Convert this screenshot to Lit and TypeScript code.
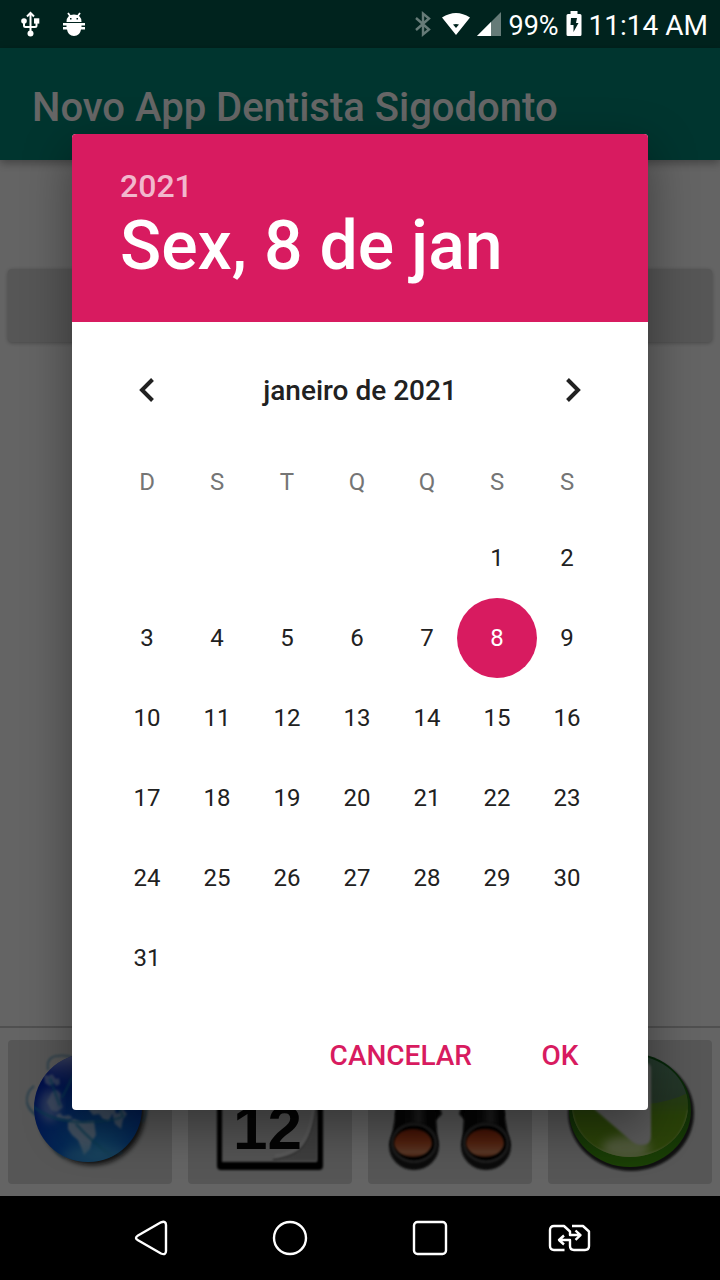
import { LitElement, html, css, svg, nothing } from "lit";
import { customElement, state } from "lit/decorators.js";
import { classMap } from "lit/directives/class-map.js";

const WEEKDAYS = [
  ["D", "domingo"],
  ["S", "segunda-feira"],
  ["T", "terça-feira"],
  ["Q", "quarta-feira"],
  ["Q", "quinta-feira"],
  ["S", "sexta-feira"],
  ["S", "sábado"],
];
const SHORT_DAYS = ["Dom", "Seg", "Ter", "Qua", "Qui", "Sex", "Sáb"];
const FIRST_WEEKDAY = 5;
const DAYS_IN_MONTH = 31;

const usbIcon = html`<svg width="24" height="28" viewBox="0 0 24 28" aria-hidden="true">
  <g fill="none" stroke="#fff" stroke-width="2">
    <path d="M12.5 4v20M6 11v4.500q0 1.500 1.500 1.500h9.500q1.500 0 1.500-1.500V11" />
    <path d="M9 6.500l3.500-3.500 3.500 3.500" />
  </g>
  <circle cx="6" cy="11" r="2.800" fill="#fff" />
  <rect x="16" y="8.300" width="5.300" height="5.300" fill="#fff" />
  <circle cx="12.500" cy="23.500" r="3" fill="#fff" />
</svg>`;

const bugIcon = html`<svg width="24" height="28" viewBox="0 0 24 28" aria-hidden="true">
  <path d="M6 3l2.500 3.500M18 3l-2.500 3.500" stroke="#fff" stroke-width="1.800" />
  <path fill="#fff" fill-rule="evenodd" d="M4.500 12q0-7.500 7.500-7.500t7.500 7.500zM8 8v1.500h1.500V8zM14.500 8v1.500H16V8z" />
  <path fill="#fff" d="M1 13h22v2.500h-3.500V17H23v2.500h-4q-1 6.500-7 6.500t-7-6.500H1V17h3.500v-1.500H1z" />
</svg>`;

const bluetoothIcon = html`<svg width="16" height="28" viewBox="0 0 16 28" aria-hidden="true">
  <path d="M1 8l13 11.500-6 5V3.500l6 5L1 20" fill="none" stroke="#667b78" stroke-width="2.400" />
</svg>`;

const wifiIcon = html`<svg width="28" height="28" viewBox="0 0 28 28" aria-hidden="true">
  <path fill="#fff" fill-rule="evenodd" d="M0 7.500Q14-1.500 28 7.500L14 25zM11 14.500l3 3.500 3-3.500q-3-1-6 0z" />
</svg>`;

const signalIcon = html`<svg width="24" height="28" viewBox="0 0 24 28" aria-hidden="true">
  <path d="M24 2v24H0z" fill="#667b78" />
  <path d="M14 12v14H0z" fill="#fff" />
</svg>`;

const batteryIcon = html`<svg width="16" height="28" viewBox="0 0 16 28" aria-hidden="true">
  <path fill="#fff" d="M4.500 1h7v3H14q1.500 0 1.500 1.500v19Q15.500 26 14 26H2Q.5 26 .5 24.500v-19Q.5 4 2 4h2.500z" />
  <path fill="#00231e" d="M5 8h6l-1 5h2.500L7.500 22v-7H4.500z" />
</svg>`;

const globeArt = html`<svg class="art" viewBox="0 0 164 144" aria-hidden="true">
  <defs>
    <radialGradient id="sea" cx=".6" cy=".9" r=".85">
      <stop offset="0" stop-color="#2a9be6" />
      <stop offset=".4" stop-color="#0a62d0" />
      <stop offset=".75" stop-color="#053cc4" />
      <stop offset="1" stop-color="#0424b8" />
    </radialGradient>
    <linearGradient id="gloss" x1="0" y1="0" x2="0" y2="1">
      <stop offset="0" stop-color="#dfe6ff" stop-opacity=".85" />
      <stop offset="1" stop-color="#5a7fe0" stop-opacity=".1" />
    </linearGradient>
    <filter id="soft1"><feGaussianBlur stdDeviation="1" /></filter>
    <filter id="soft2" x="-20%" y="-20%" width="140%" height="140%"><feGaussianBlur stdDeviation="2.500" /></filter>
    <filter id="soft4" x="-30%" y="-30%" width="160%" height="160%"><feGaussianBlur stdDeviation="4" /></filter>
    <clipPath id="ball"><circle cx="80" cy="68" r="54" /></clipPath>
  </defs>
  <circle cx="84" cy="72" r="53" fill="#111" opacity=".85" filter="url(#soft2)" />
  <g fill="none" stroke="#1671a8" stroke-width="1.600" opacity=".6" filter="url(#soft1)">
    <path d="M26 46q-8 6-7 16 0 8 12 16" />
    <path d="M19 62q2 10 14 15" />
    <path d="M40 30q-2-12 8-14 10-2 22 3" />
    <path d="M45 104q1 10 12 14M100 112q10 3 14 0" />
    <path d="M134 82q5-6 5-18" />
  </g>
  <circle cx="80" cy="68" r="54" fill="url(#sea)" />
  <g clip-path="url(#ball)">
    <ellipse cx="62" cy="26" rx="26" ry="16" fill="url(#gloss)" filter="url(#soft4)" />
    <ellipse cx="42" cy="66" rx="10" ry="16" fill="#a5bcf0" opacity=".6" filter="url(#soft4)" />
    <g fill="#b9d2ee" filter="url(#soft1)">
      <path d="M36 34l4 2 4-2 4 5 3-1 1 6-4 2-2-3-4 3-5-3z" opacity=".6" />
      <path d="M44 52l5-2 4 4-1 7 3 6-6 5-6-2-4-8z" opacity=".55" />
      <path d="M60 82l6-3 8 3 12-1 2 14-4 6-2 8-6 6-3-8-3-7-6-5-4-6z" opacity=".85" />
      <path d="M81 62l24-4 3 12-4 4-3 7-6-2-4-5-6 1-4-5z" opacity=".8" />
      <path d="M104 70l6 4 4-6 5 6-4 5-2 10-6-5-2-7z" opacity=".75" />
      <path d="M48 75l4-2 3 3 6-1 4 3-5 2-6-1-5-1z" opacity=".7" />
    </g>
    <g fill="none" stroke="#1288bd" stroke-width="2" opacity=".8" filter="url(#soft1)">
      <path d="M22 64q20 18 52 18t42-6M68 84q16 18 38 34M42 38q4 12 10 28M66 34L54 58M106 58l9 18" />
    </g>
    <ellipse cx="88" cy="116" rx="34" ry="10" fill="#4fb0e6" opacity=".5" filter="url(#soft4)" />
  </g>
</svg>`;

const calendarArt = html`<svg class="art" viewBox="0 0 164 144" aria-hidden="true">
  <defs>
    <filter id="blurc"><feGaussianBlur stdDeviation="1.200" /></filter>
  </defs>
  <rect x="29" y="12" width="106" height="118" rx="4" fill="#050505" filter="url(#blurc)" />
  <rect x="34" y="30" width="95" height="92" fill="#cfcfcf" filter="url(#blurc)" />
  <path d="M35 121h94" stroke="#888" stroke-width="1.500" filter="url(#blurc)" />
  <path d="M129 66v55H84q22-2 32-14 11-14 13-41z" fill="#9c9c9c" filter="url(#blurc)" />
  <path d="M128 64q-2 30-13 43-8 10-30 13" fill="none" stroke="#666" stroke-width="1.500" filter="url(#blurc)" />
  <path d="M126 62q-2 28-13 42-7 9-26 12" fill="none" stroke="#e8e8e8" stroke-width="2" filter="url(#blurc)" />
  <text class="art-number" x="45" y="109">12</text>
</svg>`;

const lens = (x: number) => svg`
  <ellipse cx=${x} cy="106" rx="25" ry="24" fill="#1c1c1c" filter="url(#blurb)" />
  <ellipse cx=${x} cy="103" rx="22" ry="19" fill="#050505" stroke="#606060" stroke-width="1.500" filter="url(#blurb)" />
  <ellipse cx=${x - 1} cy="103" rx="19" ry="14" fill="url(#lens)" filter="url(#blurb)" />`;

const binocularsArt = html`<svg class="art" viewBox="0 0 164 144" aria-hidden="true">
  <defs>
    <filter id="blurb"><feGaussianBlur stdDeviation="1" /></filter>
    <linearGradient id="lens" x1="0" y1="0" x2="0" y2="1">
      <stop offset="0" stop-color="#a02c0c" />
      <stop offset=".5" stop-color="#cc5628" />
      <stop offset=".85" stop-color="#dc8a60" />
      <stop offset="1" stop-color="#b04a20" />
    </linearGradient>
    <linearGradient id="tube">
      <stop offset="0" stop-color="#050505" />
      <stop offset=".4" stop-color="#151515" />
      <stop offset=".6" stop-color="#484848" />
      <stop offset=".8" stop-color="#080808" />
    </linearGradient>
  </defs>
  <path d="M27 74l9-54h26l10 20h20l10-20h26l9 54-2 6H97l-6-6 2-6H72l2 6-6 6H28z" fill="#0c0c0c" filter="url(#blurb)" />
  <path d="M30 60h37l3 46H22z" fill="url(#tube)" filter="url(#blurb)" />
  <path d="M97 60h37l8 46H94z" fill="url(#tube)" filter="url(#blurb)" />
  ${lens(46)}${lens(118)}
</svg>`;

const downloadArt = html`<svg class="art" viewBox="0 0 164 144" aria-hidden="true">
  <defs>
    <filter id="blurd"><feGaussianBlur stdDeviation="1.200" /></filter>
    <filter id="blurg" x="-40%" y="-60%" width="180%" height="220%"><feGaussianBlur stdDeviation="5" /></filter>
    <linearGradient id="rim" x1="0" y1="0" x2="0" y2="1">
      <stop offset="0" stop-color="#0a5a18" />
      <stop offset=".5" stop-color="#2a7012" />
      <stop offset="1" stop-color="#45a010" />
    </linearGradient>
    <linearGradient id="face" x1="0" y1="0" x2="0" y2="1">
      <stop offset="0" stop-color="#5c8f70" />
      <stop offset=".45" stop-color="#557f5c" />
      <stop offset=".6" stop-color="#639c1c" />
      <stop offset="1" stop-color="#8cbc28" />
    </linearGradient>
    <clipPath id="disc"><ellipse cx="82" cy="66" rx="58" ry="51" /></clipPath>
  </defs>
  <ellipse cx="83" cy="73" rx="63" ry="58" fill="#111" opacity=".85" filter="url(#blurd)" />
  <ellipse cx="82" cy="70" rx="61" ry="57" fill="url(#rim)" />
  <ellipse cx="82" cy="66" rx="58" ry="51" fill="url(#face)" />
  <g clip-path="url(#disc)">
    <path d="M100 64q22-2 42-12v70H22V64z" fill="#62a010" opacity=".6" />
    <ellipse cx="78" cy="108" rx="24" ry="12" fill="#dcebb0" opacity=".8" filter="url(#blurg)" />
    <path d="M23 70q8 46 59 46t59-46" fill="none" stroke="#c0d890" stroke-width="2.500" opacity=".75" filter="url(#blurd)" />
  </g>
  <path d="M60 22h36q7 0 7 8v66q0 9-9 9-7 0-12-5L38 62z" fill="#dedede" filter="url(#blurd)" />
</svg>`;

@customElement("date-dialog")
export class DateDialog extends LitElement {
  @state() private selected = 8;

  static styles = css`
    :host {
      display: block;
      width: 100%;
      overflow: hidden;
      border-radius: 4px;
      background: #fff;
      color: #212121;
      font-family: Roboto, sans-serif;
      box-shadow: 0 16px 48px rgba(0, 0, 0, 0.4);
    }
    button {
      border: 0;
      padding: 0;
      background: none;
      color: inherit;
      font-family: inherit;
      cursor: pointer;
    }
    .header {
      display: flex;
      flex-direction: column;
      align-items: flex-start;
      padding: 32px 48px 36px;
      background: #d81b60;
      color: #fff;
    }
    .year {
      font-size: 32px;
      line-height: 40px;
      font-weight: 500;
      color: rgba(255, 255, 255, 0.7);
    }
    .date {
      margin: 0;
      font-size: 68px;
      line-height: 80px;
      font-weight: 500;
    }
    .month {
      display: flex;
      align-items: center;
      justify-content: space-between;
      height: 112px;
      padding: 12px 27px 0;
    }
    .arrow {
      display: grid;
      place-items: center;
      width: 96px;
      height: 96px;
    }
    .month-name {
      margin: 0;
      padding-top: 2px;
      font-size: 28px;
      line-height: 32px;
      font-weight: 500;
    }
    .grid-wrap {
      padding: 0 46px 0 40px;
    }
    table {
      width: 100%;
      table-layout: fixed;
      border-collapse: collapse;
    }
    th,
    td {
      padding: 0;
      text-align: center;
      font-size: 24px;
      font-weight: 400;
    }
    th {
      height: 72px;
      color: #757575;
    }
    td {
      height: 80px;
    }
    .day {
      display: block;
      width: 80px;
      height: 80px;
      margin: 0 calc(50% - 40px);
      border-radius: 50%;
      font-size: 24px;
    }
    .day.selected {
      background: #d81b60;
      color: #fff;
    }
    .actions {
      display: flex;
      justify-content: flex-end;
      align-items: center;
      height: 110px;
      padding: 2px 24px 0 0;
    }
    .action {
      min-width: 128px;
      height: 72px;
      padding: 0 24px;
      color: #d81b60;
      font-size: 28px;
      font-weight: 500;
    }
  `;

  private renderWeeks() {
    const count = Math.ceil((FIRST_WEEKDAY + DAYS_IN_MONTH) / 7);
    return Array.from({ length: count }, (_, week) => html`<tr>
      ${WEEKDAYS.map((_, col) => {
        const day = week * 7 + col - FIRST_WEEKDAY + 1;
        return html`<td>${day < 1 || day > DAYS_IN_MONTH
          ? nothing
          : html`<button
              class=${classMap({ day: true, selected: day === this.selected })}
              aria-pressed=${day === this.selected ? "true" : "false"}
              @click=${() => (this.selected = day)}
            >${day}</button>`}</td>`;
      })}
    </tr>`);
  }

  render() {
    const weekday = SHORT_DAYS[(FIRST_WEEKDAY + this.selected - 1) % 7];
    return html`
      <div class="header">
        <button class="year">2021</button>
        <h2 class="date">${weekday}, ${this.selected} de jan</h2>
      </div>
      <div class="month">
        <button class="arrow" aria-label="Mês anterior">
          <svg width="24" height="24" viewBox="0 0 24 24"><path d="M17.500 1.500L7 12l10.500 10.500" fill="none" stroke="#212121" stroke-width="4" /></svg>
        </button>
        <h3 class="month-name">janeiro de 2021</h3>
        <button class="arrow" aria-label="Próximo mês">
          <svg width="24" height="24" viewBox="0 0 24 24"><path d="M6.500 1.500L17 12 6.500 22.500" fill="none" stroke="#212121" stroke-width="4" /></svg>
        </button>
      </div>
      <div class="grid-wrap">
        <table>
          <thead><tr>${WEEKDAYS.map(([s, name]) => html`<th scope="col" abbr=${name}>${s}</th>`)}</tr></thead>
          <tbody>${this.renderWeeks()}</tbody>
        </table>
      </div>
      <div class="actions">
        <button class="action">CANCELAR</button>
        <button class="action">OK</button>
      </div>
    `;
  }
}

@customElement("app-root")
export class AppRoot extends LitElement {
  static styles = css`
    :host {
      display: flex;
      flex-direction: column;
      min-height: 100vh;
      font-family: Roboto, sans-serif;
    }
    svg {
      display: block;
    }
    button {
      border: 0;
      padding: 0;
      background: none;
      cursor: pointer;
    }
    .status {
      display: flex;
      justify-content: space-between;
      align-items: center;
      height: 48px;
      padding: 0 12px 0 18px;
      background: #00231e;
      color: #fff;
    }
    .status-group {
      display: flex;
      align-items: center;
      gap: 20px;
    }
    .status-group.system {
      gap: 7px;
    }
    .bluetooth {
      margin-right: 4px;
    }
    .percent,
    .clock {
      padding-top: 3px;
      line-height: 32px;
    }
    .percent {
      font-size: 27px;
    }
    .clock {
      font-size: 28px;
    }
    .screen {
      position: relative;
      flex: 1;
      display: flex;
      flex-direction: column;
      background: #fafafa;
    }
    .app-bar {
      display: flex;
      align-items: center;
      height: 112px;
      padding: 0 32px;
      background: #008577;
      color: #fff;
      box-shadow: 0 3px 9px rgba(0, 0, 0, 0.35);
    }
    .title {
      margin: 0;
      padding-top: 8px;
      font-size: 40px;
      line-height: 48px;
      font-weight: 500;
    }
    .content {
      flex: 1;
      display: flex;
      flex-direction: column;
      padding: 109px 8px 0;
    }
    .field {
      height: 73px;
      border-radius: 4px;
      background: #d6d7d7;
      box-shadow: 0 1px 4px rgba(0, 0, 0, 0.3);
    }
    .tools {
      display: grid;
      grid-template-columns: repeat(4, 1fr);
      gap: 16px;
      padding: 12px 8px;
      border-top: 2px solid #c8c8c8;
    }
    .tool {
      height: 144px;
      border-radius: 4px;
      background: #d6d7d7;
    }
    .art {
      width: 100%;
      height: 100%;
    }
    .art-number {
      font: bold 62px "Liberation Sans", sans-serif;
      fill: #0a0a0a;
    }
    .scrim {
      position: absolute;
      inset: 0;
      display: flex;
      align-items: center;
      padding: 0 10%;
      overflow: hidden;
      background: rgba(0, 0, 0, 0.6);
    }
    .nav {
      display: flex;
      height: 84px;
      padding: 0 80px 0 82px;
      background: #000;
    }
    .nav-button {
      flex: 1;
      display: grid;
      place-items: center;
    }
    .nav-button svg {
      fill: none;
      stroke: #fff;
      stroke-width: 2.4;
      stroke-linejoin: round;
    }
  `;

  render() {
    return html`
      <div class="status">
        <div class="status-group">${usbIcon}${bugIcon}</div>
        <div class="status-group system">
          <span class="bluetooth">${bluetoothIcon}</span>${wifiIcon}${signalIcon}
          <span class="percent">99%</span>${batteryIcon}
          <span class="clock">11:14 AM</span>
        </div>
      </div>
      <div class="screen">
        <header class="app-bar"><h1 class="title">Novo App Dentista Sigodonto</h1></header>
        <main class="content"><button class="field" aria-label="Data"></button></main>
        <footer class="tools">
          <button class="tool" aria-label="Internet">${globeArt}</button>
          <button class="tool" aria-label="Agenda">${calendarArt}</button>
          <button class="tool" aria-label="Pesquisar">${binocularsArt}</button>
          <button class="tool" aria-label="Baixar">${downloadArt}</button>
        </footer>
        <div class="scrim"><date-dialog role="dialog" aria-label="Escolher data"></date-dialog></div>
      </div>
      <nav class="nav">
        <button class="nav-button" aria-label="Voltar">
          <svg width="44" height="44" viewBox="0 0 44 44"><path d="M8 19.500L31 6.300Q36 4.500 36 9v26q0 4.500-5 2.500L8 24.200q-4-2.300 0-4.700z" /></svg>
        </button>
        <button class="nav-button" aria-label="Início">
          <svg width="44" height="44" viewBox="0 0 44 44"><circle cx="21" cy="22" r="16" /></svg>
        </button>
        <button class="nav-button" aria-label="Recentes">
          <svg width="44" height="44" viewBox="0 0 44 44"><rect x="5" y="6" width="32" height="32" rx="3.500" /></svg>
        </button>
        <button class="nav-button" aria-label="Alternar janelas">
          <svg width="44" height="44" viewBox="0 0 44 44">
            <path d="M16.500 34H6q-4 0-4-4V14q0-4 4-4h10l6 5.500V19h9M27.500 14.500l5 4.700-5 4.700" />
            <path d="M24 10h11l6 5.500V30q0 4-4 4H26q-4 0-4-4v-6H11.500M16 19.500l-5 4.500 5 4.500" />
          </svg>
        </button>
      </nav>
    `;
  }
}
